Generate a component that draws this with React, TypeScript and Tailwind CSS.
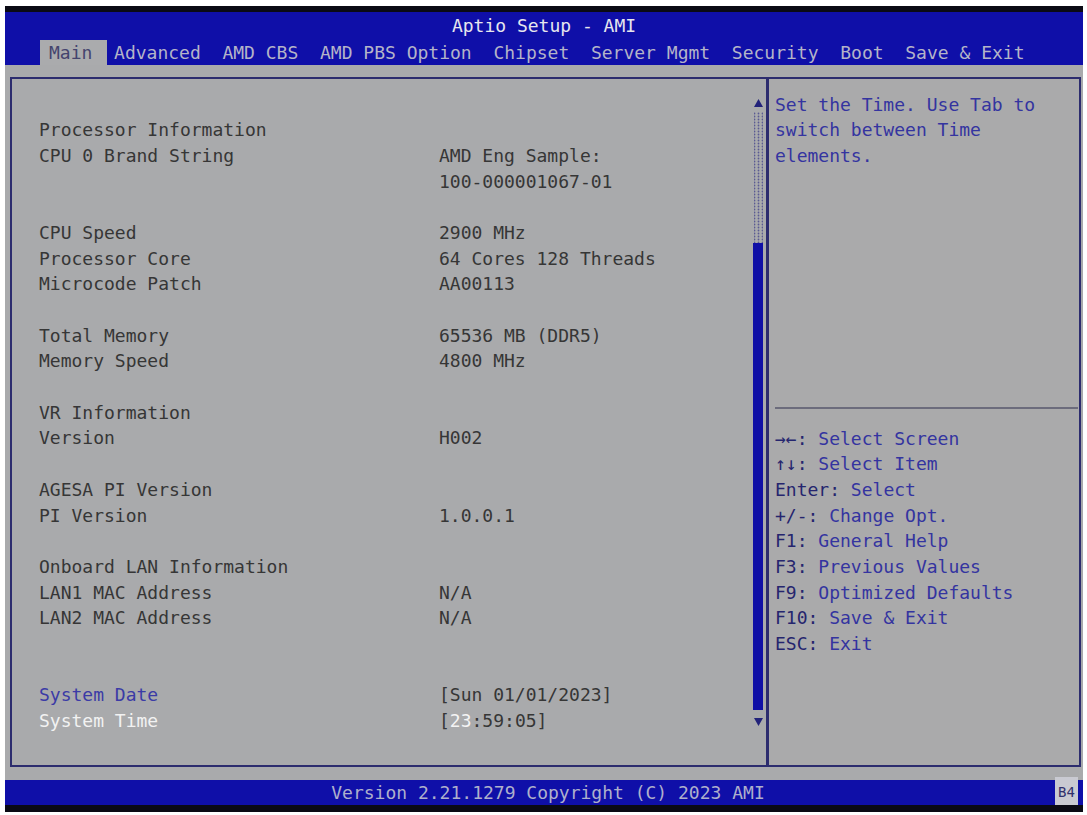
import React from 'react';

const mono = { fontFamily: '"DejaVu Sans Mono", "Liberation Mono", monospace' };

type Row = { label?: string; value?: React.ReactNode; kind?: 'date' | 'time' };

const rows: Row[] = [
  {},
  { label: 'Processor Information' },
  { label: 'CPU 0 Brand String', value: 'AMD Eng Sample:' },
  { value: '100-000001067-01' },
  {},
  { label: 'CPU Speed', value: '2900 MHz' },
  { label: 'Processor Core', value: '64 Cores 128 Threads' },
  { label: 'Microcode Patch', value: 'AA00113' },
  {},
  { label: 'Total Memory', value: '65536 MB (DDR5)' },
  { label: 'Memory Speed', value: '4800 MHz' },
  {},
  { label: 'VR Information' },
  { label: 'Version', value: 'H002' },
  {},
  { label: 'AGESA PI Version' },
  { label: 'PI Version', value: '1.0.0.1' },
  {},
  { label: 'Onboard LAN Information' },
  { label: 'LAN1 MAC Address', value: 'N/A' },
  { label: 'LAN2 MAC Address', value: 'N/A' },
  {},
  {},
  { label: 'System Date', value: '[Sun 01/01/2023]', kind: 'date' },
  {
    label: 'System Time',
    kind: 'time',
    value: (
      <>
        [<span className="text-[#f4f4f4]">23</span>:59:05]
      </>
    ),
  },
];

const tabs = ['Advanced', 'AMD CBS', 'AMD PBS Option', 'Chipset', 'Server Mgmt', 'Security', 'Boot', 'Save & Exit'];

const keys: [string, string][] = [
  ['→←:', ' Select Screen'],
  ['↑↓:', ' Select Item'],
  ['Enter:', ' Select'],
  ['+/-:', ' Change Opt.'],
  ['F1:', ' General Help'],
  ['F3:', ' Previous Values'],
  ['F9:', ' Optimized Defaults'],
  ['F10:', ' Save & Exit'],
  ['ESC:', ' Exit'],
];

function ScrollBar() {
  return (
    <div className="flex w-[10px] flex-col items-center">
      <svg width="9" height="8" viewBox="0 0 9 8" className="mt-[20px]">
        <polygon points="4.5,0 9,8 0,8" fill="#22227a" />
      </svg>
      <svg width="10" height="131" className="mt-[5px]">
        <defs>
          <pattern id="dots" width="4" height="3" patternUnits="userSpaceOnUse">
            <circle cx="1.5" cy="1.5" r="0.9" fill="#5a5a92" />
          </pattern>
        </defs>
        <rect x="1" y="0" width="9" height="131" fill="url(#dots)" />
      </svg>
      <div className="h-[467px] w-[10px] bg-[#0f0fa6]" />
      <svg width="9" height="8" viewBox="0 0 9 8" className="mt-[8px]">
        <polygon points="0,0 9,0 4.5,8" fill="#22227a" />
      </svg>
    </div>
  );
}

export default function App() {
  return (
    <div
      className="flex h-[815px] w-[1087px] flex-col bg-white pt-[6px] pb-[3px] pl-[5px] pr-[4px] text-[18px]"
      style={mono}
    >
      <div className="h-[6px] bg-[#0a0a14]" />

      {/* header */}
      <div className="flex h-[53px] flex-col bg-[#0f0fa8]">
        <div className="h-[28px] text-center leading-[28px] text-[#e6e6ee]">Aptio Setup - AMI</div>
        <div className="flex h-[25px] items-stretch gap-[21.7px] pl-[44px] leading-[25px] text-[#b4b4c8]">
          <span className="-ml-[9px] -mr-[15px] bg-[#aaabad] pl-[9px] pr-[15px] text-[#44446e]">Main</span>
          {tabs.map((t) => (
            <span key={t} className="whitespace-pre">
              {t}
            </span>
          ))}
        </div>
      </div>

      {/* body */}
      <div className="flex flex-1 flex-col bg-[#a9aaac] pt-[12px] pb-[13px] pl-[5px] pr-[2px]">
        <div className="flex flex-1 border-2 border-[#2c2c6e] bg-[#a9aaac]">
          <div className="flex flex-1 pr-[3px]">
            <div className="flex-1 pl-[27px] pt-[12.5px] leading-[25.7px] text-[#363636]">
              {rows.map((r, i) => (
                <div key={i} className="flex h-[25.7px] whitespace-pre">
                  <span
                    className={
                      'w-[400px] ' +
                      (r.kind === 'date' ? 'text-[#3b3ba6]' : r.kind === 'time' ? 'text-[#f2f2f2]' : '')
                    }
                  >
                    {r.label ?? ''}
                  </span>
                  <span>{r.value ?? ''}</span>
                </div>
              ))}
            </div>
            <ScrollBar />
          </div>

          <div className="flex w-[313px] flex-col border-l-[3px] border-[#2c2c6e] bg-[#aaaaab] pl-[6px] pt-[12.5px] leading-[25.7px] text-[#3434a0]">
            <div className="h-[25.7px]">Set the Time. Use Tab to</div>
            <div className="h-[25.7px]">switch between Time</div>
            <div className="h-[25.7px]">elements.</div>
            <div className="h-[231.3px]" />
            <div className="h-[25.7px] pr-[1px]">
              <div className="mt-[7px] h-[2px] bg-[#6c6c7c]" />
            </div>
            {keys.map(([k, t]) => (
              <div key={k} className="h-[25.7px] whitespace-pre">
                <span className="text-[#25256e]">{k}</span>
                {t}
              </div>
            ))}
          </div>
        </div>
      </div>

      {/* footer */}
      <div className="flex h-[25px] items-stretch bg-[#0f0fa8] leading-[25px]">
        <div className="flex-1 pl-[36px] text-center text-[#aeb0cc]">
          Version 2.21.1279 Copyright (C) 2023 AMI
        </div>
        <div className="-mt-[3px] mb-[-2px] mr-[5px] flex w-[23px] items-center justify-center bg-[#c9cad2] text-[14px] text-[#30306c]">
          B4
        </div>
      </div>
      <div className="h-[7px] bg-[#0a0a14]" />
    </div>
  );
}
